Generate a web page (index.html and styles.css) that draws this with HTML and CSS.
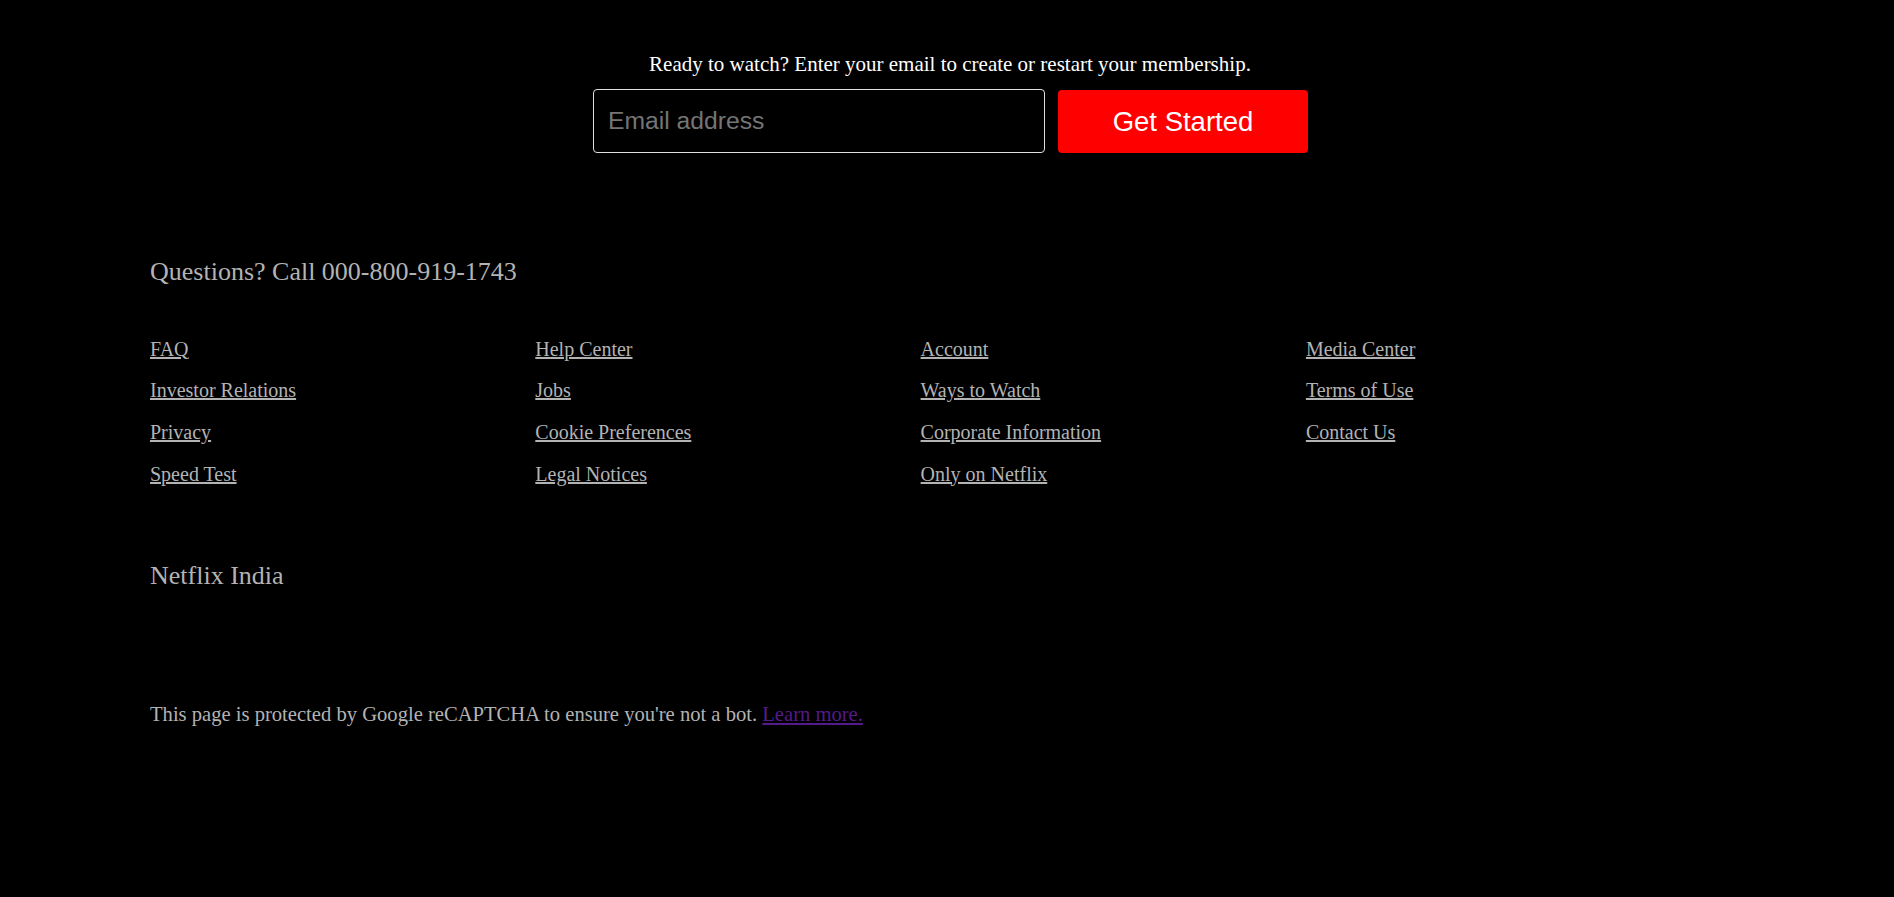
FILE: index.html
```html
<!DOCTYPE html>
<html lang="en">
<head>
<meta charset="utf-8">
<title>Netflix India</title>
<link rel="stylesheet" href="styles.css">
</head>
<body>
<section class="signup">
  <p class="signup-text">Ready to watch? Enter your email to create or restart your membership.</p>
  <form class="signup-form">
    <input class="email-input" type="email" placeholder="Email address">
    <button class="start-btn" type="button">Get Started</button>
  </form>
</section>
<footer class="footer">
  <p class="footer-call">Questions? Call 000-800-919-1743</p>
  <div class="footer-links">
    <a href="#">FAQ</a>
    <a href="#">Help Center</a>
    <a href="#">Account</a>
    <a href="#">Media Center</a>
    <a href="#">Investor Relations</a>
    <a href="#">Jobs</a>
    <a href="#">Ways to Watch</a>
    <a href="#">Terms of Use</a>
    <a href="#">Privacy</a>
    <a href="#">Cookie Preferences</a>
    <a href="#">Corporate Information</a>
    <a href="#">Contact Us</a>
    <a href="#">Speed Test</a>
    <a href="#">Legal Notices</a>
    <a href="#">Only on Netflix</a>
  </div>
  <p class="footer-country">Netflix India</p>
  <p class="footer-captcha">This page is protected by Google reCAPTCHA to ensure you're not a bot. <a class="learn-more" href="#">Learn more.</a></p>
</footer>
</body>
</html>
```
FILE: styles.css
```css
html, body {
  margin: 0;
  padding: 0;
  background: #000;
}
body {
  font-family: "Liberation Serif", "Times New Roman", serif;
  color: #b3b3b3;
  min-height: 897px;
}
.signup {
  display: flex;
  flex-direction: column;
  align-items: center;
  padding: 52px 0 0 6px;
}
.signup-text {
  margin: 0;
  color: #fff;
  font-size: 21px;
}
.signup-form {
  display: flex;
  gap: 13px;
  margin-top: 12px;
  padding-left: 1px;
}
.email-input {
  box-sizing: border-box;
  width: 452px;
  height: 64px;
  background: #000;
  border: 1px solid #e0e0e0;
  border-radius: 4px;
  padding: 0 14px;
  color: #fff;
  font-family: "Liberation Sans", Arial, sans-serif;
  font-size: 24.7px;
  outline: none;
}
.email-input::placeholder {
  color: #757575;
}
.start-btn {
  box-sizing: border-box;
  width: 250px;
  height: 63px;
  margin-top: 1px;
  background: #ff0000;
  color: #fff;
  border: none;
  border-radius: 4px;
  font-family: "Liberation Sans", Arial, sans-serif;
  font-size: 27.5px;
  cursor: pointer;
}
.footer {
  padding: 103.5px 0 0 150px;
}
.footer-call {
  margin: 0;
  font-size: 26px;
}
.footer-links {
  display: grid;
  grid-template-columns: repeat(4, 385.3px);
  row-gap: 18.7px;
  margin-top: 51px;
}
.footer-links a {
  color: #b3b3b3;
  font-size: 20px;
  justify-self: start;
}
.footer-country {
  margin: 75.5px 0 0;
  font-size: 26px;
}
.footer-captcha {
  margin: 111.5px 0 0;
  font-size: 20.6px;
}
.learn-more {
  color: #551a8b;
}
```
